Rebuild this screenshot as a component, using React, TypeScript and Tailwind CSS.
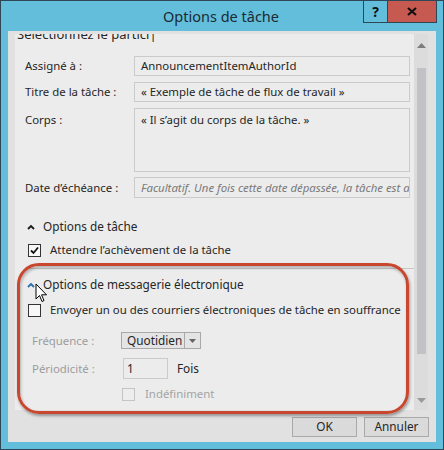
import React from "react";

const font = { fontFamily: '"Noto Sans", "Open Sans", sans-serif' };

function Check({ checked, disabled }: { checked?: boolean; disabled?: boolean }) {
  return (
    <div
      className={`w-[13px] h-[13px] border flex items-center justify-center shrink-0 ${
        disabled ? "border-[#c4c4c4] bg-[#ededed]" : "border-[#333] bg-[#f7f7f7]"
      }`}
    >
      {checked && (
        <svg width="11" height="11" viewBox="0 0 11 11">
          <path d="M2 5.5 L4.5 8 L9 2.5" fill="none" stroke="#111" strokeWidth="1.8" />
        </svg>
      )}
    </div>
  );
}

function Caret({ color }: { color: string }) {
  return (
    <svg width="8" height="6" viewBox="0 0 8 6" className="shrink-0">
      <path d="M1 5 L4 2 L7 5" fill="none" stroke={color} strokeWidth="1.8" />
    </svg>
  );
}

export default function App() {
  return (
    <div
      className="relative w-[444px] h-[450px] border border-[#2e4756] bg-[#63bedb] flex flex-col text-[11.4px] text-[#262626] overflow-hidden"
      style={font}
    >
      {/* Title bar */}
      <div className="h-[30px] shrink-0 flex items-center justify-center">
        <span className="text-[14.5px] text-[#1b2a33] mt-[2px] mr-[2px]">Options de tâche</span>
      </div>
      <div className="absolute top-0 right-[6px] flex h-[22px] border border-t-0 border-[#2e4756]">
        <div className="w-[24px] h-full flex items-center justify-center border-r border-[#2e4756] text-[14px] font-bold text-[#111]">
          ?
        </div>
        <div className="w-[48px] h-full bg-[#c75a50] flex items-center justify-center">
          <svg width="10" height="9" viewBox="0 0 10 9">
            <path d="M1 1 L9 8 M9 1 L1 8" stroke="#111" strokeWidth="2.2" />
          </svg>
        </div>
      </div>

      {/* Client area */}
      <div className="flex-1 mx-[7px] mb-[7px] bg-[#e1e1e1] flex flex-col">
        <div className="mt-[3px] ml-[7px] mr-[8px] h-[376px] bg-[#ececec] flex overflow-hidden">
          {/* content */}
          <div className="flex-1 pl-[10px] pr-[4px] flex flex-col overflow-hidden">
            <div className="h-[22px] shrink-0 relative">
              <div className="absolute left-[-8px] top-[-9px] text-[13px] leading-[18px] whitespace-nowrap">
                Sélectionnez le partici|
              </div>
            </div>
            <div className="flex h-[20px] shrink-0">
              <div className="w-[109px] flex items-center">Assigné à :</div>
              <div className="flex-1 border border-[#cbcbcb] flex items-center pl-[6px] whitespace-nowrap overflow-hidden">
                AnnouncementItemAuthorId
              </div>
            </div>
            <div className="flex h-[20px] shrink-0 mt-[6px]">
              <div className="w-[109px] flex items-center">Titre de la tâche :</div>
              <div className="flex-1 border border-[#cbcbcb] flex items-center pl-[6px] whitespace-nowrap overflow-hidden">
                « Exemple de tâche de flux de travail »
              </div>
            </div>
            <div className="flex h-[64px] shrink-0 mt-[6px]">
              <div className="w-[109px] pt-[3px] leading-[18px]">Corps :</div>
              <div className="flex-1 border border-[#cbcbcb] pl-[6px] pt-[2px] leading-[18px] whitespace-nowrap overflow-hidden">
                « Il s’agit du corps de la tâche. »
              </div>
            </div>
            <div className="flex h-[21px] shrink-0 mt-[5px]">
              <div className="w-[109px] flex items-center">Date d’échéance :</div>
              <div className="flex-1 border border-[#cbcbcb] flex items-center pl-[6px] whitespace-nowrap overflow-hidden italic text-[#7a7a7a]">
                Facultatif. Une fois cette date dépassée, la tâche est automatiquement
              </div>
            </div>

            <div className="flex items-center h-[18px] shrink-0 mt-[20px] pl-[2px]">
              <Caret color="#1a1a1a" />
              <span className="ml-[8px] text-[11.8px]">Options de tâche</span>
            </div>
            <div className="flex items-center h-[18px] shrink-0 mt-[5px] pl-[3px]">
              <Check checked />
              <span className="ml-[9px]">Attendre l’achèvement de la tâche</span>
            </div>
            <div className="h-px bg-[#c6c6c6] mt-[9px] shrink-0 -mr-[4px]" />

            <div className="flex items-center h-[18px] shrink-0 mt-[7px] pl-[2px]">
              <Caret color="#2a6fa8" />
              <span className="ml-[8px] text-[11.8px]">Options de messagerie électronique</span>
            </div>
            <div className="flex items-center h-[18px] shrink-0 mt-[7px] pl-[3px]">
              <Check />
              <span className="ml-[9px] whitespace-nowrap">
                Envoyer un ou des courriers électroniques de tâche en souffrance
              </span>
            </div>
            <div className="flex items-center h-[17px] shrink-0 mt-[13px] pl-[7px]">
              <div className="w-[89px] text-[#9c9c9c]">Fréquence :</div>
              <div className="h-[17px] w-[80px] border border-[#a9a9a9] bg-[#e4e4e4] flex">
                <div className="flex-1 flex items-center pl-[5px] text-[11.8px]">Quotidien</div>
                <div className="w-[16px] border-l border-[#a9a9a9] flex items-center justify-center">
                  <svg width="7" height="4" viewBox="0 0 7 4">
                    <path d="M0 0 L7 0 L3.5 4 Z" fill="#666" />
                  </svg>
                </div>
              </div>
            </div>
            <div className="flex items-center h-[21px] shrink-0 mt-[9px] pl-[7px]">
              <div className="w-[91px] text-[#9c9c9c]">Périodicité :</div>
              <div className="h-[21px] w-[45px] border border-[#cbcbcb] flex items-center pl-[3px] text-[11.8px]">1</div>
              <span className="ml-[9px] text-[11.8px]">Fois</span>
            </div>
            <div className="flex items-center h-[18px] shrink-0 mt-[6px] pl-[97px]">
              <Check disabled />
              <span className="ml-[10px] text-[#a4a4a4]">Indéfiniment</span>
            </div>
          </div>
          {/* scrollbar */}
          <div className="w-[14px] bg-[#dcdcdc] flex flex-col items-center shrink-0">
            <div className="h-[20px] flex items-center justify-center pt-[2px]">
              <svg width="9" height="5" viewBox="0 0 9 5">
                <path d="M0 5 L4.5 0 L9 5 Z" fill="#7d7d7d" />
              </svg>
            </div>
            <div className="w-[9px] h-[286px] mt-[14px] bg-[#c2c2c6]" />
            <div className="flex-1" />
            <div className="h-[20px] flex items-center justify-center">
              <svg width="9" height="5" viewBox="0 0 9 5">
                <path d="M0 0 L9 0 L4.5 5 Z" fill="#9a9a9a" />
              </svg>
            </div>
          </div>
        </div>
        <div className="flex justify-end gap-[7px] mr-[7px] mt-[7px]">
          <div className="w-[65px] h-[20px] border border-[#a9a9a9] bg-[#dadada] flex items-center justify-center text-[11.8px]">
            OK
          </div>
          <div className="w-[65px] h-[20px] border border-[#a9a9a9] bg-[#dadada] flex items-center justify-center text-[11.8px]">
            Annuler
          </div>
        </div>
      </div>

      {/* Red annotation */}
      <div
        className="absolute left-[16px] top-[262px] w-[392px] h-[151px] border-[3px] border-[#c8472e] rounded-[22px]"
        style={{ boxShadow: "1px 2px 3px rgba(0,0,0,0.35), inset 1px 2px 3px rgba(0,0,0,0.25)" }}
      />

      {/* Mouse cursor */}
      <svg className="absolute left-[34px] top-[282px]" width="13" height="20" viewBox="0 0 13 20">
        <path
          d="M1 1 L1 16 L4.5 12.5 L7 18.5 L9 17.5 L6.5 11.8 L11.5 11.8 Z"
          fill="#fff"
          stroke="#000"
          strokeWidth="1"
          strokeLinejoin="miter"
        />
      </svg>
    </div>
  );
}
